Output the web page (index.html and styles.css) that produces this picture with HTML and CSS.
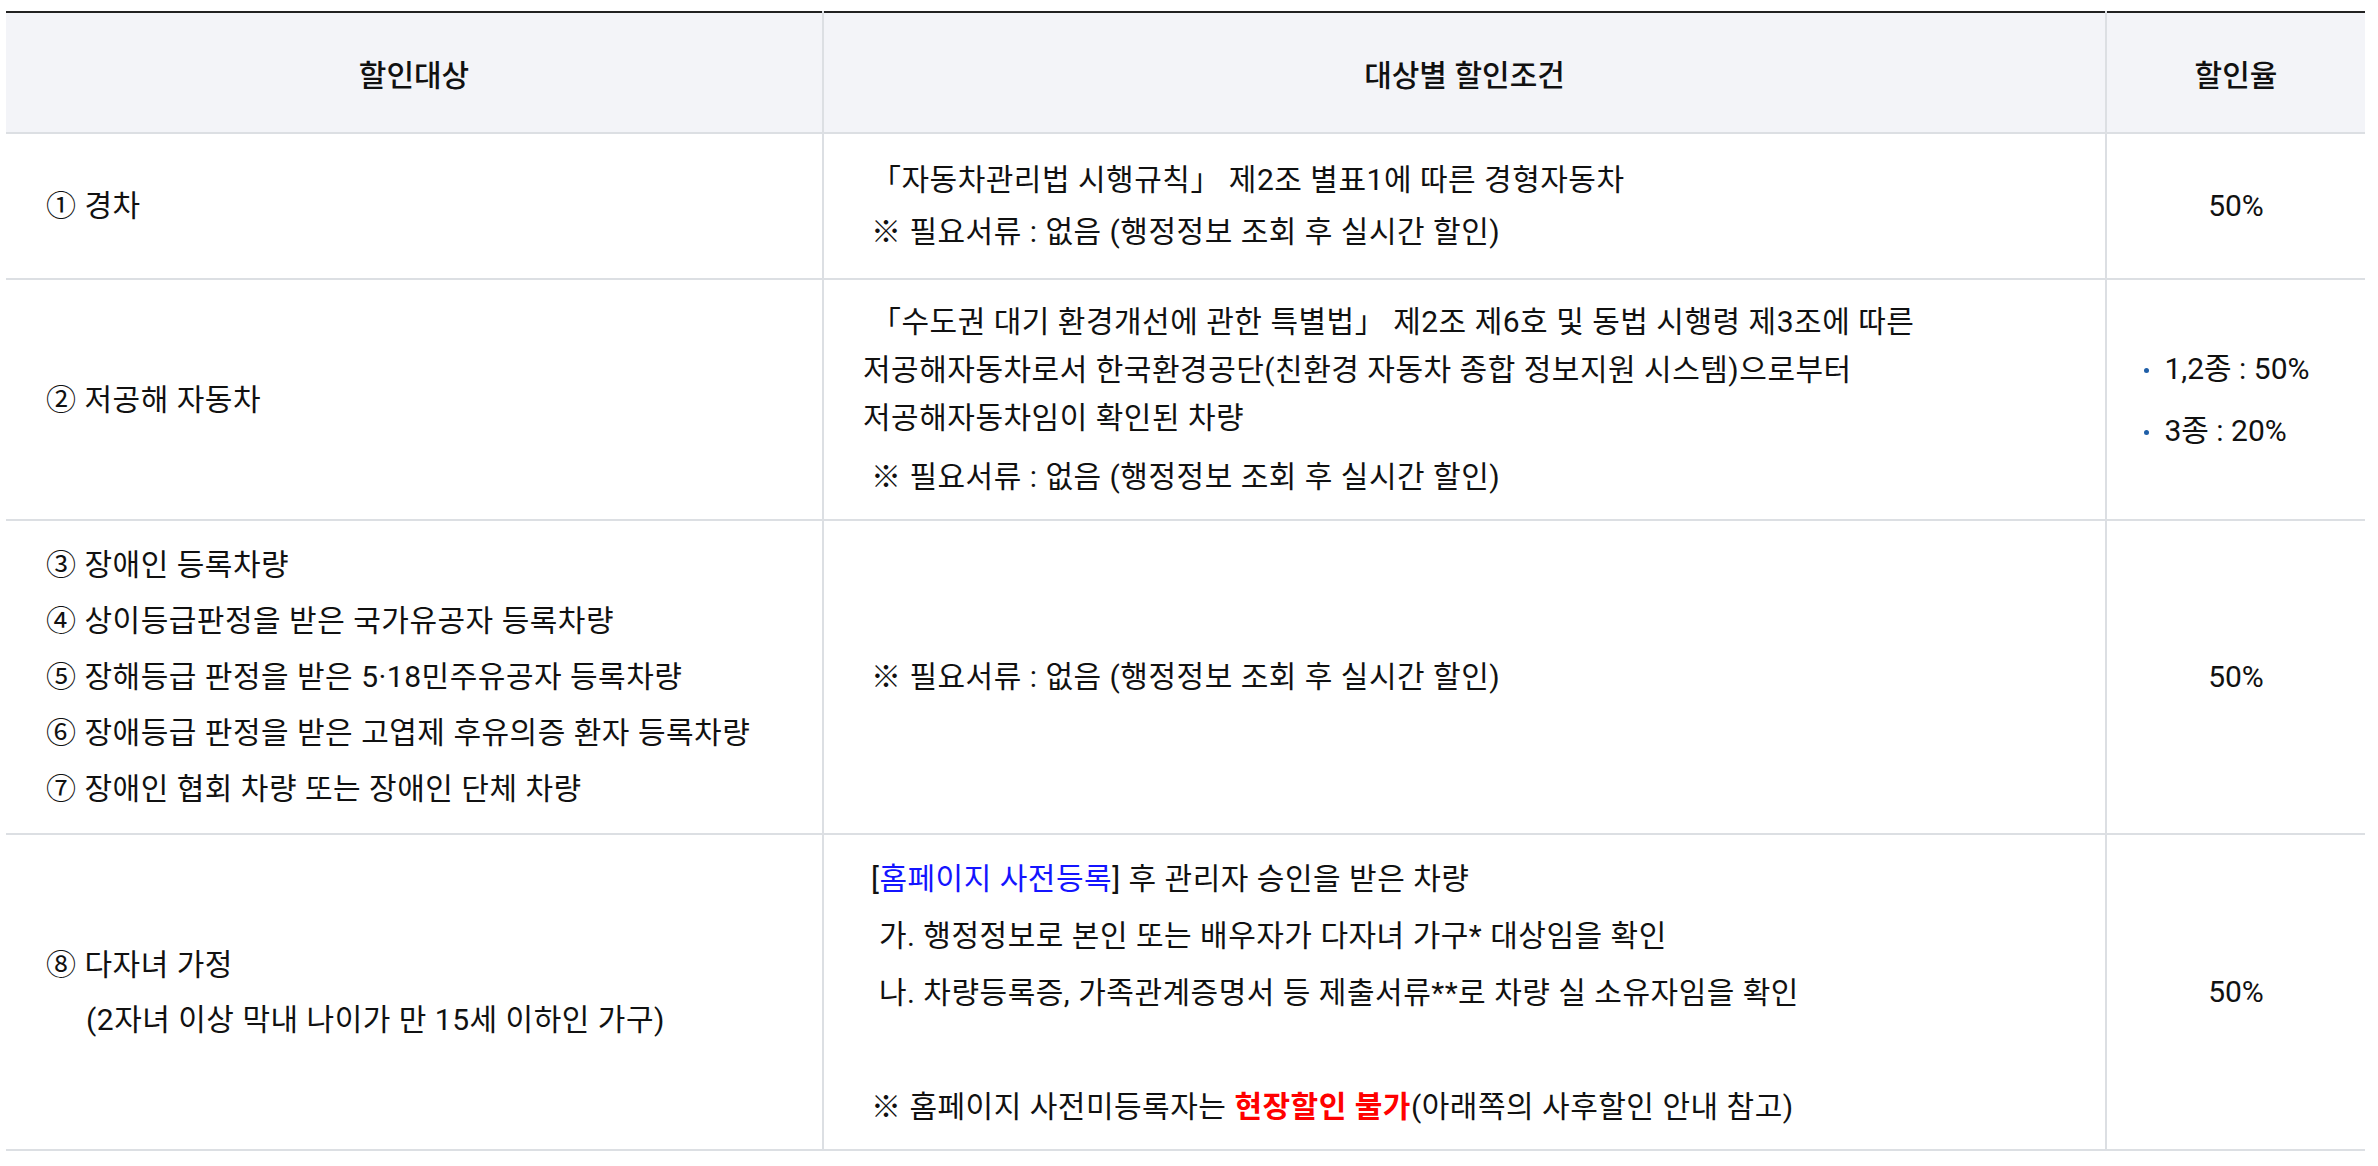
FILE: index.html
```html
<!DOCTYPE html>
<html lang="ko">
<head>
<meta charset="utf-8">
<title>할인대상</title>
<link rel="stylesheet" href="styles.css">
</head>
<body>
<div class="wrap">
  <table class="dc-table">
    <colgroup>
      <col class="c1">
      <col class="c2">
      <col class="c3">
    </colgroup>
    <thead>
      <tr>
        <th>할인대상</th>
        <th>대상별 할인조건</th>
        <th>할인율</th>
      </tr>
    </thead>
    <tbody>
      <tr class="r1">
        <td class="target"><p class="ln">① 경차</p></td>
        <td class="cond">
          <p class="ln l52">&nbsp;「자동차관리법 시행규칙」 제2조 별표1에 따른 경형자동차</p>
          <p class="ln l52">&nbsp;※ 필요서류 : 없음 (행정정보 조회 후 실시간 할인)</p>
        </td>
        <td class="rate">50%</td>
      </tr>
      <tr class="r2">
        <td class="target"><p class="ln">② 저공해 자동차</p></td>
        <td class="cond">
          <p class="ln l48">&nbsp;「수도권 대기 환경개선에 관한 특별법」 제2조 제6호 및 동법 시행령 제3조에 따른<br>저공해자동차로서 한국환경공단(친환경 자동차 종합 정보지원 시스템)으로부터<br>저공해자동차임이 확인된 차량</p>
          <p class="ln l48 gap">&nbsp;※ 필요서류 : 없음 (행정정보 조회 후 실시간 할인)</p>
        </td>
        <td class="rate">
          <ul class="rate-list">
            <li>1,2종 : 50%</li>
            <li>3종 : 20%</li>
          </ul>
        </td>
      </tr>
      <tr class="r3">
        <td class="target">
          <p class="ln l56">③ 장애인 등록차량</p>
          <p class="ln l56">④ 상이등급판정을 받은 국가유공자 등록차량</p>
          <p class="ln l56">⑤ 장해등급 판정을 받은 5·18민주유공자 등록차량</p>
          <p class="ln l56">⑥ 장애등급 판정을 받은 고엽제 후유의증 환자 등록차량</p>
          <p class="ln l56">⑦ 장애인 협회 차량 또는 장애인 단체 차량</p>
        </td>
        <td class="cond"><p class="ln">&nbsp;※ 필요서류 : 없음 (행정정보 조회 후 실시간 할인)</p></td>
        <td class="rate">50%</td>
      </tr>
      <tr class="r4">
        <td class="target">
          <p class="ln l55">⑧ 다자녀 가정</p>
          <p class="ln l55 indent">(2자녀 이상 막내 나이가 만 15세 이하인 가구)</p>
        </td>
        <td class="cond">
          <p class="ln l57">&nbsp;[<span class="link">홈페이지 사전등록</span>] 후 관리자 승인을 받은 차량</p>
          <p class="ln l57">&nbsp;&nbsp;가. 행정정보로 본인 또는 배우자가 다자녀 가구* 대상임을 확인</p>
          <p class="ln l57">&nbsp;&nbsp;나. 차량등록증, 가족관계증명서 등 제출서류**로 차량 실 소유자임을 확인</p>
          <p class="ln l57">&nbsp;</p>
          <p class="ln l57">&nbsp;※ 홈페이지 사전미등록자는 <strong class="warn">현장할인 불가</strong>(아래쪽의 사후할인 안내 참고)</p>
        </td>
        <td class="rate">50%</td>
      </tr>
    </tbody>
  </table>
</div>
</body>
</html>
```

FILE: styles.css
```css
html, body {
  margin: 0;
  padding: 0;
  background: #ffffff;
}

body {
  font-family: Roboto, "Noto Sans CJK KR", sans-serif;
  font-size: 30px;
  color: #111111;
}

.wrap {
  padding: 11px 13px 0 6px;
}

.dc-table {
  width: 2359px;
  border-collapse: collapse;
  table-layout: fixed;
  border-top: 2px solid #222222;
}

.c1 { width: 817px; }
.c2 { width: 1283px; }
.c3 { width: 259px; }

.dc-table th {
  height: 119px;
  padding: 0;
  background: #f3f4f8;
  font-weight: 500;
  text-align: center;
  vertical-align: middle;
  border-bottom: 2px solid #dcdfe3;
  border-left: 2px solid #dcdfe3;
}

.dc-table th:first-child,
.dc-table td:first-child {
  border-left: none;
}

.dc-table td {
  padding: 0 20px 0 40px;
  vertical-align: middle;
  border-bottom: 2px solid #dcdfe3;
  border-left: 2px solid #dcdfe3;
  line-height: 48px;
  letter-spacing: 0.5px;
}

.dc-table td.cond {
  padding-left: 39px;
}

.dc-table td.rate {
  padding: 0;
  text-align: center;
  letter-spacing: 0;
}

.r1 td { height: 144px; }
.r2 td { height: 239px; }
.r3 td { height: 312px; }
.r4 td { height: 314px; }

.ln {
  margin: 0;
  white-space: nowrap;
}

.l48 { line-height: 48px; }
.l52 { line-height: 52px; }
.l55 { line-height: 55px; }
.l56 { line-height: 56px; }
.l57 { line-height: 57px; }

.gap { margin-top: 11px; }

.indent { padding-left: 40px; }

.link { color: #1414ff; }

.warn {
  color: #ff0000;
  font-weight: 700;
}

.rate-list {
  display: inline-block;
  margin: 0;
  padding: 0;
  list-style: none;
  text-align: left;
  position: relative;
  left: -9px;
}

.rate-list li {
  position: relative;
  padding-left: 20px;
  line-height: 48px;
}

.rate-list li + li {
  margin-top: 14px;
}

.rate-list li::before {
  content: "";
  position: absolute;
  left: 0;
  top: 23px;
  width: 5px;
  height: 5px;
  border-radius: 50%;
  background: #1f5fa8;
}
```
